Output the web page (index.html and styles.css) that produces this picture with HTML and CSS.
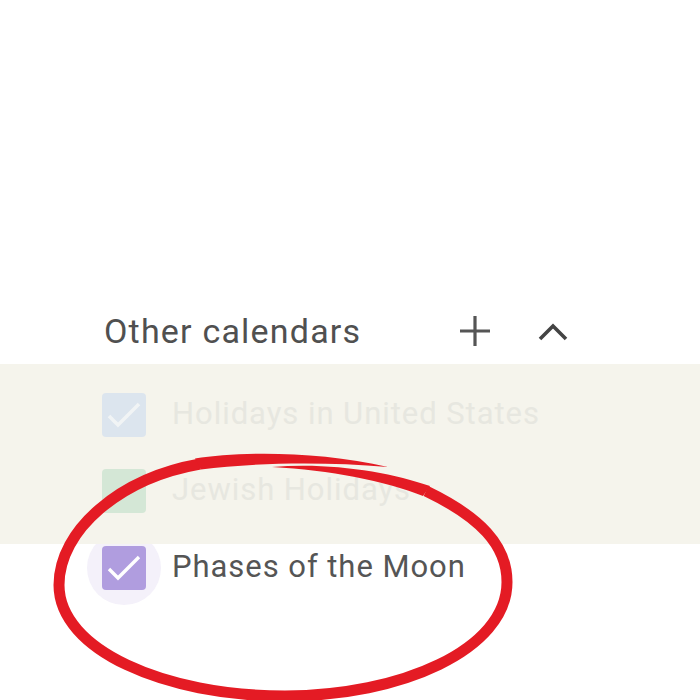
FILE: index.html
```html
<!DOCTYPE html>
<html lang="en">
  <head>
    <meta charset="UTF-8" />
    <meta name="viewport" content="width=device-width, initial-scale=1.0" />
    <title>Other calendars</title>

    <link rel="stylesheet" href="styles.css">
  </head>
  <body>
    <div class="page">
      <div class="section-head">
        <span class="title">Other calendars</span>
        <div class="actions">
          <!-- add calendar -->
          <svg class="icon-plus" width="34" height="34" viewBox="0 0 34 34">
            <path d="M17 2 V32 M2 17 H32" stroke="#555" stroke-width="3.2" fill="none" />
          </svg>
          <!-- collapse -->
          <svg class="icon-up" width="32" height="20" viewBox="0 0 32 20">
            <path d="M3 17 L16 4 L29 17" stroke="#444" stroke-width="3.6" fill="none" />
          </svg>
        </div>
      </div>

      <div class="band">
        <div class="cal-row faded">
          <span class="box box-blue">
            <svg width="44" height="44" viewBox="0 0 44 44"><path d="M7 23 L16 32 L37 11" stroke="#f1f4f5" stroke-width="3.6" fill="none" /></svg>
          </span>
          <span class="cal-name">Holidays in United States</span>
        </div>
        <div class="cal-row faded">
          <span class="box box-green"></span>
          <span class="cal-name">Jewish Holidays</span>
        </div>
      </div>

      <div class="cal-row">
        <span class="box box-purple">
          <svg width="44" height="44" viewBox="0 0 44 44"><path d="M7 23 L16 32 L37 11" stroke="#ffffff" stroke-width="3.4" fill="none" /></svg>
        </span>
        <span class="cal-name">Phases of the Moon</span>
      </div>

      <!-- hand drawn circle over the list -->
      <svg class="scribble" width="700" height="700" viewBox="0 0 700 700">
        <path d="M426 491 C 480 517, 507 545, 507 582 C 507 650, 400 696, 285 696 C 165 696, 59 650, 59 585 C 59 530, 120 478, 200 464"
              stroke="#e41b24" stroke-width="11" fill="none" />
        <path d="M195 458.5 C 240 451, 320 451, 388 467 C 320 461, 250 463, 201 469.5 Z" fill="#e41b24" />
        <path d="M272 467 C 330 462, 390 472, 430 486 L 423 496 C 385 481, 330 470, 272 467 Z" fill="#e41b24" />
      </svg>
    </div>
  </body>
</html>
```

FILE: styles.css
```css
* {
  margin: 0;
  padding: 0;
  box-sizing: border-box;
}

body {
  font-family: Roboto, "Liberation Sans", sans-serif;
  background-color: #ffffff;
  color: #555;
}

.page {
  position: relative;
  width: 700px;
  height: 700px;
  overflow: hidden;
  padding-top: 311px;
}

.section-head {
  display: flex;
  align-items: center;
  height: 40px;
  padding-left: 104px;
  margin-bottom: 13px;
}

.title {
  font-size: 34px;
  letter-spacing: 1.2px;
  color: #505050;
  width: 354px;
}

.actions {
  display: flex;
  align-items: center;
  gap: 45px;
}

.icon-up {
  margin-top: 2px;
}

.band {
  position: relative;
  z-index: 1;
  background-color: #f5f4ec;
  padding: 29px 0 31px;
  display: flex;
  flex-direction: column;
  gap: 32px;
}

.cal-row {
  display: flex;
  align-items: center;
  height: 44px;
  padding-left: 102px;
  gap: 26px;
}

.band + .cal-row {
  margin-top: 2px;
}

.box {
  position: relative;
  width: 44px;
  height: 44px;
  border-radius: 4px;
  display: flex;
  align-items: center;
  justify-content: center;
  flex-shrink: 0;
}

.box-blue {
  background-color: #dce5ee;
}

.box-green {
  background-color: #d4e7d6;
}

.box-purple {
  background-color: #b09ddf;
}

/* hover halo round the checkbox */
.box-purple::before {
  content: "";
  position: absolute;
  left: -15px;
  top: -15px;
  width: 74px;
  height: 74px;
  border-radius: 50%;
  background-color: #f4f1fa;
  z-index: -1;
}

.cal-name {
  font-size: 31px;
  letter-spacing: 0.95px;
  color: #555;
  margin-top: -4px;
}

.faded .cal-name {
  color: #e7e7e0;
}

.scribble {
  position: absolute;
  top: 0;
  left: 0;
  z-index: 2;
}
```
